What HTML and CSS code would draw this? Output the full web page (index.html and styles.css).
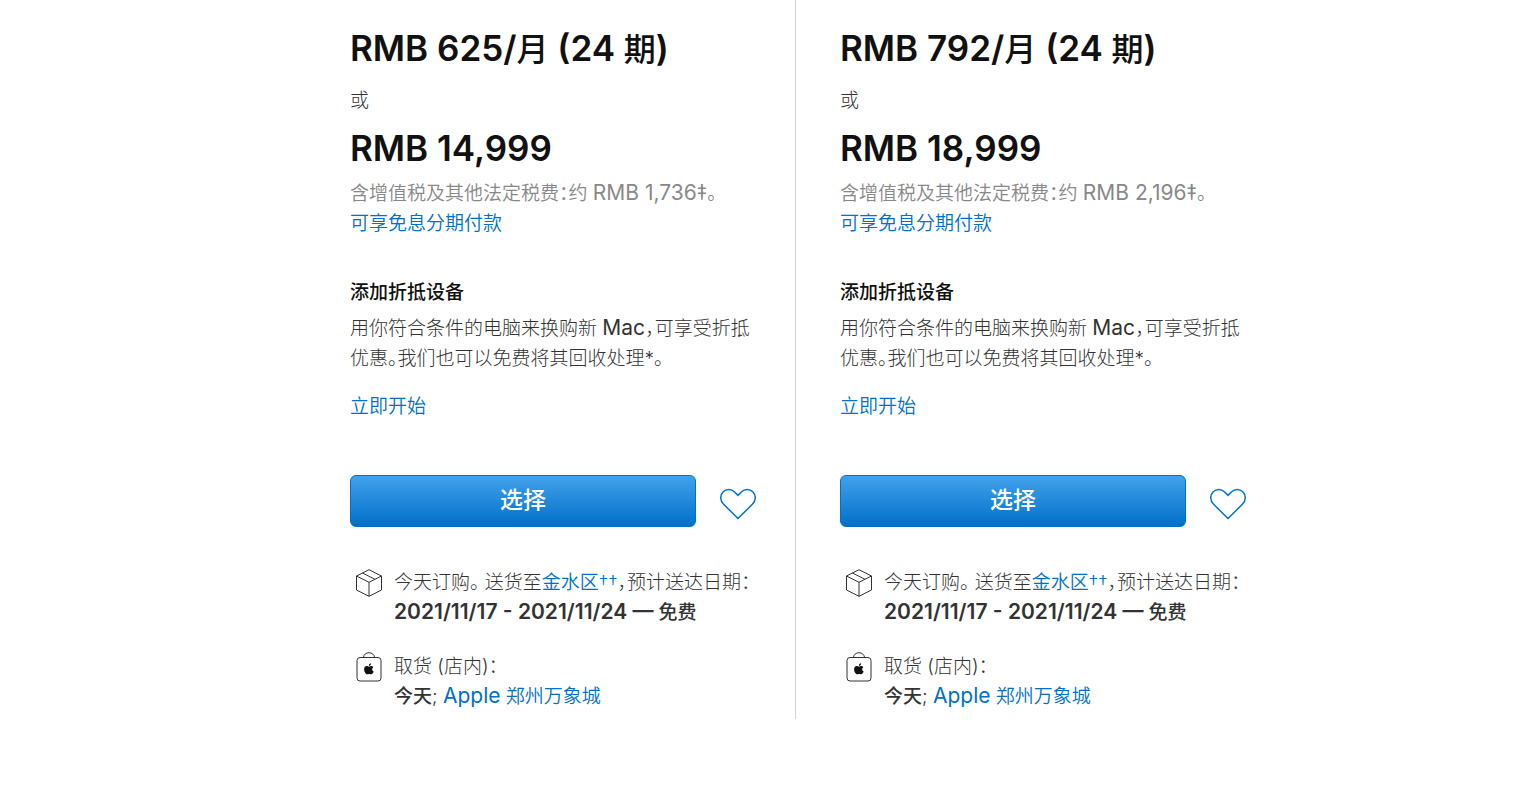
FILE: index.html
```html
<!DOCTYPE html>
<html lang="zh-CN">
    <head>
        <meta charset="utf-8">
        <title>选购 Mac</title>
        <link rel="stylesheet" href="styles.css">
    </head>
    <body>
        <svg class="sprite" aria-hidden="true">
            <symbol id="heart" viewBox="0 0 36 32">
                <path d="M18 30.500 3.600 16.300C-.1 12.600-.1 7.200 3 4c3.200-3.200 8.400-3.200 11.600 0L18 7.400 21.400 4C24.600.8 29.800.8 33 4c3.100 3.200 3.100 8.600-.6 12.300z"/>
            </symbol>
            <symbol id="box" viewBox="0 0 28 28">
                <path d="M14 .7 26.500 7v14L14 27.300 1.500 21V7zM1.500 7 14 13.300 26.500 7M14 13.300v14M7.500 4 20 10.300"/>
            </symbol>
            <symbol id="bag" viewBox="0 0 28 30">
                <rect x="2" y="5.500" width="24" height="23.500" rx="3"/>
                <path d="M8.500 5.500a5.500 4.800 0 0 1 11 0"/>
                <path class="solid" d="M16.100 11.300c.1 1.400-.9 2.600-2.200 2.600-.1-1.400.9-2.500 2.200-2.600zM14.100 14.700c.5 0 1.200-.6 2.200-.6.800 0 1.500.4 2 1.100-1.700 1.100-1.400 3.500.4 4.300-.5 1.200-1.400 2.800-2.500 2.800-.7 0-1-.4-2-.4-.9 0-1.300.4-2 .4-1.500 0-3.300-3.300-3.100-5.400.1-1.700 1.300-2.800 2.500-2.800 1 0 1.800.6 2.500.6z"/>
            </symbol>
        </svg>
        <main class="models">
            <section class="model">
                <h2 class="price">RMB 625/<span class="han">月</span> (24 <span class="han">期</span>)</h2>
                <p class="or">或</p>
                <h2 class="price">RMB 14,999</h2>
                <p class="tax">含增值税及其他法定税费：约 <span class="latin">RMB 1,736‡</span>。</p>
                <a class="finance" href="#">可享免息分期付款</a>
                <h3 class="trade-title">添加折抵设备</h3>
                <p class="trade-text">用你符合条件的电脑来换购新 <span class="latin">Mac</span>，可享受折抵优惠。我们也可以免费将其回收处理*。</p>
                <a class="trade-link" href="#">立即开始</a>
                <div class="actions">
                    <button class="select" type="button">选择</button>
                    <button class="save" type="button" aria-label="收藏"><svg><use href="#heart"/></svg></button>
                </div>
                <div class="info">
                    <svg class="icon"><use href="#box"/></svg>
                    <p>今天订购。 送货至<a href="#">金水区††</a>，预计送达日期：<br><strong><span class="latin">2021/11/17 - 2021/11/24 —</span> 免费</strong></p>
                </div>
                <div class="info">
                    <svg class="icon"><use href="#bag"/></svg>
                    <p>取货 (店内)：<br><strong>今天</strong>; <a href="#"><span class="latin">Apple</span> 郑州万象城</a></p>
                </div>
            </section>
            <section class="model">
                <h2 class="price">RMB 792/<span class="han">月</span> (24 <span class="han">期</span>)</h2>
                <p class="or">或</p>
                <h2 class="price">RMB 18,999</h2>
                <p class="tax">含增值税及其他法定税费：约 <span class="latin">RMB 2,196‡</span>。</p>
                <a class="finance" href="#">可享免息分期付款</a>
                <h3 class="trade-title">添加折抵设备</h3>
                <p class="trade-text">用你符合条件的电脑来换购新 <span class="latin">Mac</span>，可享受折抵优惠。我们也可以免费将其回收处理*。</p>
                <a class="trade-link" href="#">立即开始</a>
                <div class="actions">
                    <button class="select" type="button">选择</button>
                    <button class="save" type="button" aria-label="收藏"><svg><use href="#heart"/></svg></button>
                </div>
                <div class="info">
                    <svg class="icon"><use href="#box"/></svg>
                    <p>今天订购。 送货至<a href="#">金水区††</a>，预计送达日期：<br><strong><span class="latin">2021/11/17 - 2021/11/24 —</span> 免费</strong></p>
                </div>
                <div class="info">
                    <svg class="icon"><use href="#bag"/></svg>
                    <p>取货 (店内)：<br><strong>今天</strong>; <a href="#"><span class="latin">Apple</span> 郑州万象城</a></p>
                </div>
            </section>
        </main>
    </body>
</html>
```
FILE: styles.css
```css
*{
    box-sizing: border-box;
}
body{
    margin: 0;
    background: #fff;
    color: #333;
    font-family: Inter, "Noto Sans CJK SC", sans-serif;
    font-size: 19px;
    font-weight: 300;
    line-height: 30px;
    font-feature-settings: "halt";
}
h2, h3, p{
    margin: 0;
}
a{
    color: #0070c9;
    font-weight: 350;
    text-decoration: none;
}
strong{
    font-weight: 500;
}
.latin{
    font-size: 21px;
    font-weight: 400;
    line-height: 1;
}
strong .latin{
    font-weight: 600;
}
.sprite{
    display: none;
}
.models{
    display: grid;
    grid-template-columns: repeat(2, minmax(0, 490px));
    justify-content: center;
    padding-left: 55px;
}
.model{
    padding: 24px 36px 7px 45px;
}
.model + .model{
    border-left: 1px solid #d2d2d2;
    padding-left: 44px;
}
.price{
    color: #111;
    font-size: 35px;
    font-weight: 600;
    line-height: 48px;
}
.han{
    font-size: 32px;
    font-weight: 500;
    line-height: 1;
}
.or{
    margin: 14px 0 8px;
}
.tax{
    margin-top: 7px;
    color: #888;
    font-weight: 350;
}
.finance, .trade-link{
    display: block;
}
.trade-title{
    margin-top: 39px;
    color: #111;
    font-size: 19px;
    font-weight: 500;
}
.trade-text{
    margin: 6px 0 18px;
}
.actions{
    display: flex;
    align-items: center;
    gap: 24px;
    margin: 53px 0 41px;
}
.select{
    flex: 0 1 346px;
    height: 52px;
    padding: 0 0 6px;
    border: 1px solid #0070c9;
    border-radius: 6px;
    background: linear-gradient(#42a1ec, #0070c9);
    color: #fff;
    font-family: inherit;
    font-size: 23px;
    font-weight: 500;
}
.save{
    width: 36px;
    height: 32px;
    padding: 0;
    border: 0;
    background: none;
    margin-top: 6px;
}
.save svg{
    display: block;
    width: 36px;
    height: 32px;
    fill: none;
    stroke: #0070c9;
    stroke-width: 1.5;
}
.info{
    display: flex;
    gap: 11px;
}
.info + .info{
    margin-top: 24px;
}
.icon{
    flex: none;
    width: 28px;
    height: 30px;
    margin-left: 5px;
    fill: none;
    stroke: #333;
}
.solid{
    fill: #111;
    stroke: none;
}
```
